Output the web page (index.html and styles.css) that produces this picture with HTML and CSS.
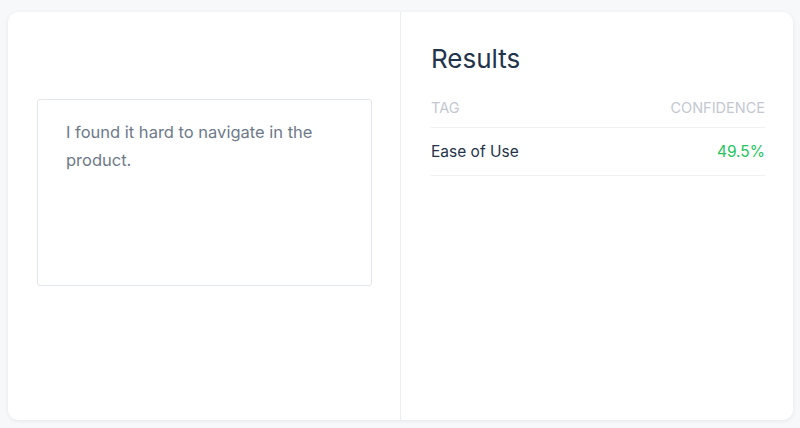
FILE: index.html
```html
<!DOCTYPE html>
<html lang="en">
<head>
<meta charset="utf-8">
<title>Results</title>
<link rel="stylesheet" href="styles.css">
</head>
<body>
<main class="card">
  <section class="input-pane">
    <div class="textbox">I found it hard to navigate in the product.</div>
  </section>
  <section class="results-pane">
    <h1 class="title">Results</h1>
    <div class="table">
      <div class="row head">
        <span>Tag</span>
        <span>Confidence</span>
      </div>
      <div class="row">
        <span class="tag">Ease of Use</span>
        <span class="conf">49.5%</span>
      </div>
    </div>
  </section>
</main>
</body>
</html>
```
FILE: styles.css
```css
* { box-sizing: border-box; }
html, body { height: 100%; }
body {
  margin: 0;
  background: #f7f8fa;
  font-family: Inter, "Open Sans", sans-serif;
  padding: 12px 7px 8px 8px;
}
.card {
  height: 100%;
  background: #ffffff;
  border-radius: 10px;
  box-shadow: 0 1px 4px rgba(30, 40, 60, 0.08);
  display: grid;
  grid-template-columns: 393px 1fr;
}
.input-pane {
  border-right: 1px solid #eceef1;
  padding: 87px 28px 0 29px;
}
.textbox {
  height: 187px;
  border: 1px solid #e3e6ea;
  border-radius: 3px;
  padding: 18px 28px;
  font-size: 16.5px;
  line-height: 28px;
  color: #6e7a8a;
}
.results-pane {
  padding: 28px 28px 0 30px;
}
.title {
  margin: 0;
  font-size: 26px;
  font-weight: 400;
  line-height: 38px;
  color: #22344c;
}
.table { margin-top: 10px; }
.row {
  display: flex;
  justify-content: space-between;
  align-items: center;
  border-bottom: 1px solid #eef0f3;
  height: 48px;
  font-size: 15.5px;
}
.row.head {
  height: 40px;
  text-transform: uppercase;
  font-size: 14.5px;
  color: #c3c8d0;
}
.tag { color: #253349; }
.conf { color: #22c55e; }
```
